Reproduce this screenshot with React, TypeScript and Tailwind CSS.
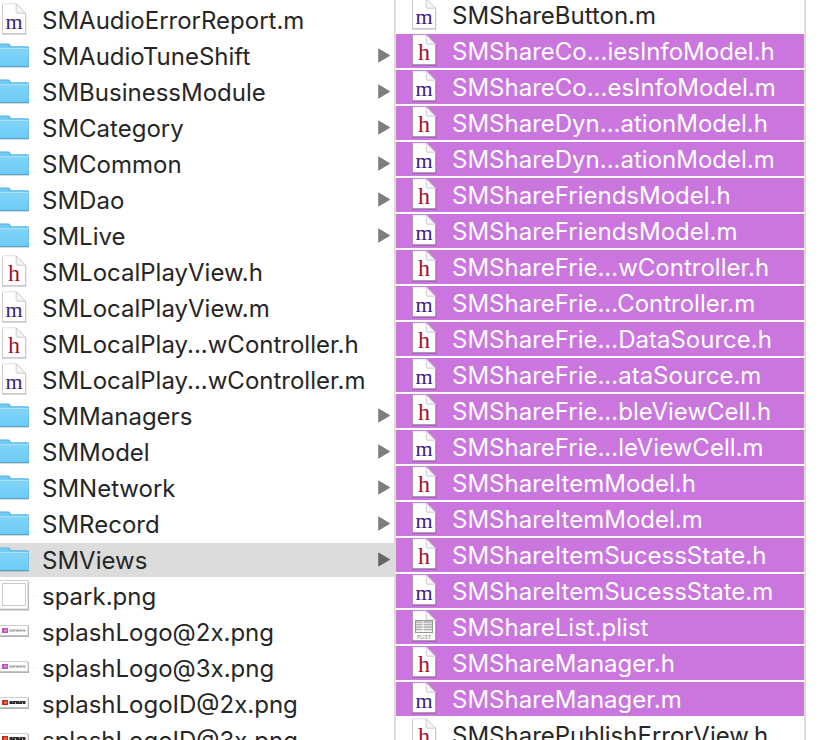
import React from "react";

type Kind = "h" | "m" | "folder" | "plist" | "image" | "logo" | "logoRed";
type Entry = { name: string; kind: Kind };

const parents: Entry[] = [
  { name: "SMAudioErrorReport.m", kind: "m" },
  { name: "SMAudioTuneShift", kind: "folder" },
  { name: "SMBusinessModule", kind: "folder" },
  { name: "SMCategory", kind: "folder" },
  { name: "SMCommon", kind: "folder" },
  { name: "SMDao", kind: "folder" },
  { name: "SMLive", kind: "folder" },
  { name: "SMLocalPlayView.h", kind: "h" },
  { name: "SMLocalPlayView.m", kind: "m" },
  { name: "SMLocalPlay...wController.h", kind: "h" },
  { name: "SMLocalPlay...wController.m", kind: "m" },
  { name: "SMManagers", kind: "folder" },
  { name: "SMModel", kind: "folder" },
  { name: "SMNetwork", kind: "folder" },
  { name: "SMRecord", kind: "folder" },
  { name: "SMViews", kind: "folder" },
  { name: "spark.png", kind: "image" },
  { name: "splashLogo@2x.png", kind: "logo" },
  { name: "splashLogo@3x.png", kind: "logo" },
  { name: "splashLogoID@2x.png", kind: "logoRed" },
  { name: "splashLogoID@3x.png", kind: "logoRed" },
];

const files: Entry[] = [
  { name: "SMShareButton.m", kind: "m" },
  { name: "SMShareCo...iesInfoModel.h", kind: "h" },
  { name: "SMShareCo...esInfoModel.m", kind: "m" },
  { name: "SMShareDyn...ationModel.h", kind: "h" },
  { name: "SMShareDyn...ationModel.m", kind: "m" },
  { name: "SMShareFriendsModel.h", kind: "h" },
  { name: "SMShareFriendsModel.m", kind: "m" },
  { name: "SMShareFrie...wController.h", kind: "h" },
  { name: "SMShareFrie...Controller.m", kind: "m" },
  { name: "SMShareFrie...DataSource.h", kind: "h" },
  { name: "SMShareFrie...ataSource.m", kind: "m" },
  { name: "SMShareFrie...bleViewCell.h", kind: "h" },
  { name: "SMShareFrie...leViewCell.m", kind: "m" },
  { name: "SMShareItemModel.h", kind: "h" },
  { name: "SMShareItemModel.m", kind: "m" },
  { name: "SMShareItemSucessState.h", kind: "h" },
  { name: "SMShareItemSucessState.m", kind: "m" },
  { name: "SMShareList.plist", kind: "plist" },
  { name: "SMShareManager.h", kind: "h" },
  { name: "SMShareManager.m", kind: "m" },
  { name: "SMSharePublishErrorView.h", kind: "h" },
];

function Page({ children }: { children: React.ReactNode }) {
  return (
    <svg viewBox="0 0 30 34" className="h-[34px] w-[30px] shrink-0" aria-hidden="true">
      <path d="M2 2h14.500L26.300 11.500V31.800H2z" fill="#000" opacity=".2" />
      <path d="M2.500 .8h13.700L25.500 10.200V30.500h-23z" fill="#fff" stroke="#000" strokeOpacity=".16" strokeWidth=".8" />
      <path d="M16.200 .8v7.800q0 1.600 1.600 1.600h7.700z" fill="#f6f6f6" stroke="#c8c8c8" strokeWidth=".9" />
      {children}
    </svg>
  );
}

function FileIcon({ kind }: { kind: Kind }) {
  if (kind === "h" || kind === "m") {
    return (
      <Page>
        <text
          x="14"
          y="26"
          textAnchor="middle"
          fontSize={kind === "h" ? 24 : 22}
          fill={kind === "h" ? "#a3122b" : "#41207c"}
          className="font-['Liberation_Serif',serif]"
        >
          {kind}
        </text>
      </Page>
    );
  }
  if (kind === "plist") {
    return (
      <Page>
        <rect x="5.500" y="10.500" width="17" height="12" fill="#f4f4f4" stroke="#979797" />
        <path d="M6 12h16M6 14.500h16M6 17h16M6 19.500h16" stroke="#b0b0b0" strokeWidth="1.400" />
        <path d="M13 11v11" stroke="#fff" strokeWidth="1" />
        <text x="14" y="29" textAnchor="middle" fontSize="5" fill="#777" className="font-['Inter',sans-serif]">
          PLIST
        </text>
      </Page>
    );
  }
  return (
    <svg viewBox="0 0 30 34" className="h-[34px] w-[30px] shrink-0" aria-hidden="true">
      {kind === "folder" && (
        <>
          <defs>
            <linearGradient id="folder" x1="0" y1="0" x2="0" y2="1">
              <stop offset="0" stopColor="#83d5f8" />
              <stop offset="1" stopColor="#6bcbf6" />
            </linearGradient>
          </defs>
          <path d="M0 8h29v21H0z" fill="#000" opacity=".14" />
          <path d="M-2 4.500H8.200q1 0 1.800 1l1.200 1.700H27.500q1.500 0 1.500 1.500V27q0 1-1 1H-2z" fill="#59b5de" />
          <path d="M-2 5.500H8q.6 0 1.100.7l1.500 2H28V10H-2z" fill="#71cbf3" />
          <path d="M-2 9.500H28.500V27.200H-2z" fill="url(#folder)" />
          <path d="M-2 9.500H28.500" stroke="#a3e1fa" />
          <path d="M-2 27.500H29" stroke="#4ea5cf" />
        </>
      )}
      {kind === "image" && (
        <>
          <path d="M-2 3h31v28.500H-2z" fill="#000" opacity=".3" />
          <path d="M-2 1.500h30V30H-2z" fill="#fff" stroke="#bbb" strokeWidth=".7" />
          <path d="M2.500 4.500h23v22h-23z" fill="#fff" stroke="#c9c9c9" />
        </>
      )}
      {(kind === "logo" || kind === "logoRed") && (
        <>
          <path d="M-2 11h31v11H-2z" fill="#000" opacity=".3" />
          <path d="M-2 10.500h30V20.500H-2z" fill="#fff" stroke="#bbb" strokeWidth=".7" />
          <path d="M2 13h6v5H2z" fill={kind === "logo" ? "#b552cf" : "#c52818"} />
          <path d="M4 14.500h3v2H4z" fill={kind === "logo" ? "#ed8fc0" : "#ef7b52"} />
          <path
            d="M9.500 15.500h16"
            stroke={kind === "logo" ? "#a5a1a8" : "#302a2a"}
            strokeWidth={kind === "logo" ? 2 : 3}
          />
          <path d="M12.500 14.500v1M15.500 15v2M19.500 14v1.500M22.500 15v2" stroke="#fff" strokeWidth=".6" />
        </>
      )}
    </svg>
  );
}

function Row({ entry, tone, inset }: { entry: Entry; tone: string; inset: string }) {
  return (
    <li>
      <button
        type="button"
        className={`flex h-[34px] w-full items-center gap-3 text-left text-2xl leading-8 ${inset} ${tone}`}
      >
        <FileIcon kind={entry.kind} />
        <span className="min-w-0 flex-1 whitespace-nowrap pt-0.5">{entry.name}</span>
        {entry.kind === "folder" && (
          <svg viewBox="0 0 12 16" className="h-4 w-3 shrink-0" aria-hidden="true">
            <path
              d="M.2 1.200v12.600q0 .9.900.4L11.600 8q.6-.5 0-1L1.100.800Q.2.300.2 1.200z"
              fill={entry.name === "SMViews" ? "#666" : "#7d7d7d"}
            />
          </svg>
        )}
      </button>
    </li>
  );
}

export default function App() {
  return (
    <main className="grid h-screen grid-cols-[396fr_410fr_22fr] overflow-hidden bg-white font-['Inter',sans-serif] text-[#262626]">
      <ul className="flex min-w-0 flex-col gap-0.5 overflow-hidden border-r-2 border-[#dcdcdc] pt-[3px]">
        {parents.map((entry) => (
          <Row
            key={entry.name}
            entry={entry}
            inset="pr-1"
            tone={entry.name === "SMViews" ? "bg-[#dcdcdc]" : "bg-white"}
          />
        ))}
      </ul>
      <div className="min-w-0 overflow-hidden border-r-2 border-[#dcdcdc]">
        <ul className="-mt-0.5 flex flex-col gap-0.5">
          {files.map((entry, i) => (
            <Row
              key={entry.name}
              entry={entry}
              inset="pl-3.5"
              tone={i > 0 && i < files.length - 1 ? "bg-[#cb75df] text-white" : "bg-white"}
            />
          ))}
        </ul>
      </div>
    </main>
  );
}
